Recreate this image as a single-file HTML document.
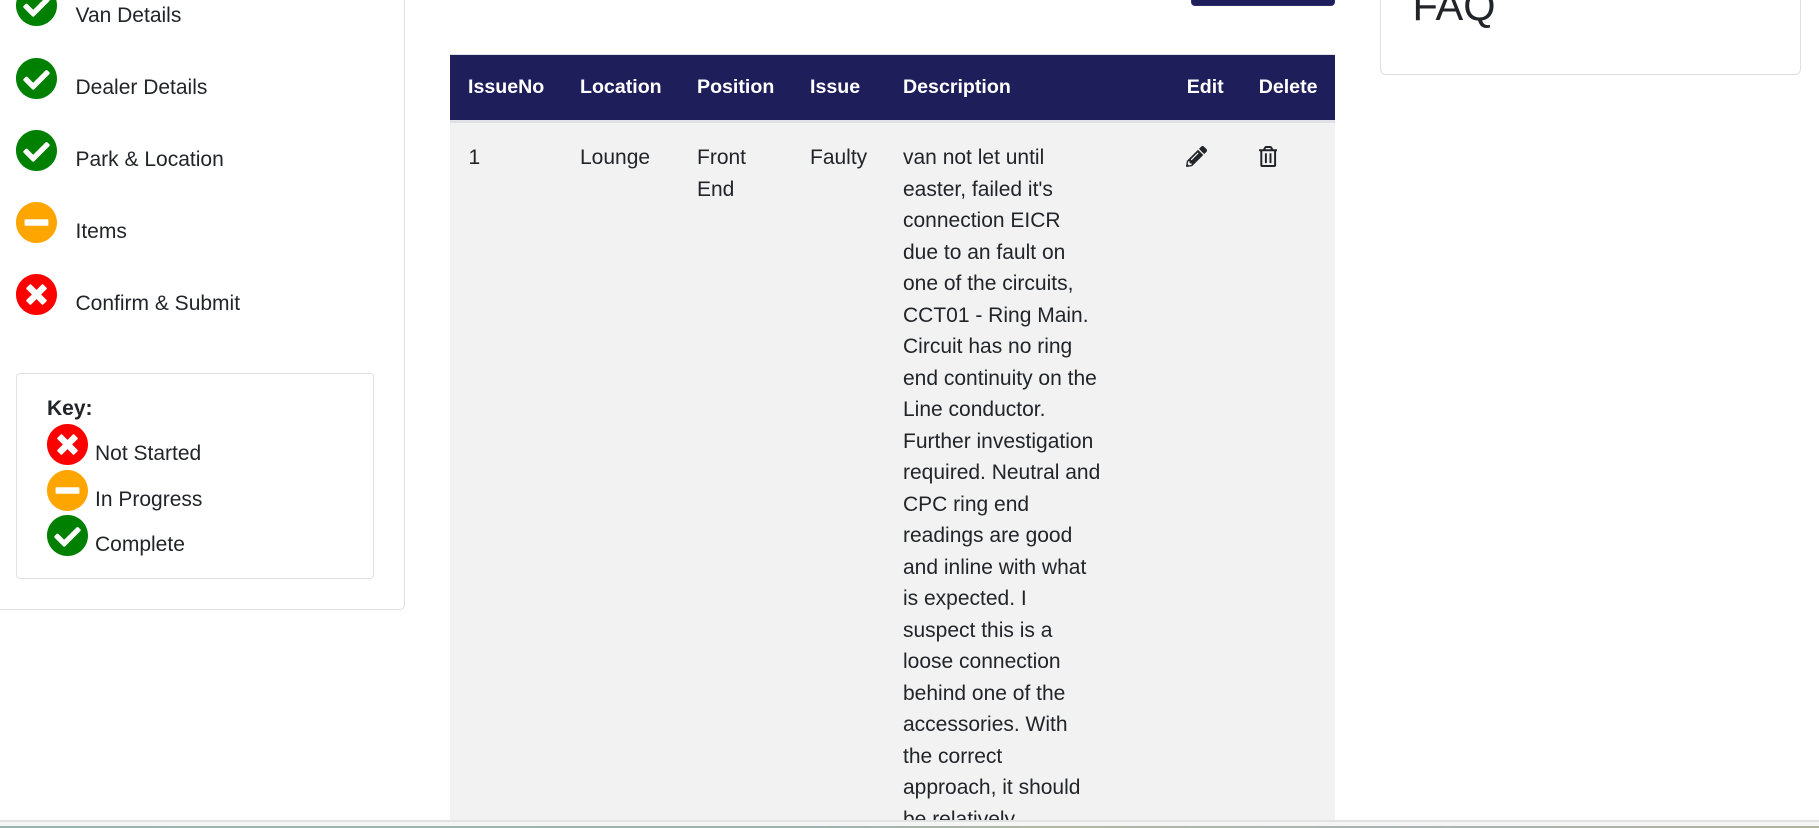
<!DOCTYPE html>
<html>
<head>
<meta charset="utf-8">
<style>
html,body{margin:0;padding:0;background:#fff}
#p{position:relative;width:1819px;height:828px;overflow:hidden;background:#fff;font-family:"Liberation Sans",Arial,sans-serif;font-size:21px;line-height:31.5px;color:#212529}
.a{position:absolute;white-space:nowrap}
.c{position:absolute;width:41px;height:41px;display:block}
.h{position:absolute;white-space:nowrap;top:72px;font-size:19.6px;font-weight:bold;color:#fff}
</style>
</head>
<body>
<div id="p">
  <svg width="0" height="0" style="position:absolute">
    <defs>
      <symbol id="ok" viewBox="8 8 496 496"><path fill="#008000" d="M504 256c0 136.967-111.033 248-248 248S8 392.967 8 256 119.033 8 256 8s248 111.033 248 248zM227.314 387.314l184-184c6.248-6.248 6.248-16.379 0-22.627l-22.627-22.627c-6.248-6.249-16.379-6.249-22.628 0L216 308.118l-70.059-70.059c-6.248-6.248-16.379-6.248-22.628 0l-22.627 22.627c-6.248 6.248-6.248 16.379 0 22.627l104 104c6.249 6.249 16.379 6.249 22.628 0z"/></symbol>
      <symbol id="no" viewBox="8 8 496 496"><path fill="#ff0000" d="M256 8C119 8 8 119 8 256s111 248 248 248 248-111 248-248S393 8 256 8zm121.6 313.1c4.7 4.7 4.7 12.3 0 17L338 377.6c-4.7 4.7-12.3 4.7-17 0L256 312l-65.1 65.6c-4.7 4.7-12.3 4.7-17 0L134.4 338c-4.7-4.7-4.7-12.3 0-17l65.6-65-65.6-65.1c-4.7-4.7-4.7-12.3 0-17l39.6-39.6c4.7-4.7 12.3-4.7 17 0l65 65.7 65.1-65.6c4.7-4.7 12.3-4.7 17 0l39.6 39.6c4.7 4.7 4.7 12.3 0 17L312 256l65.6 65.1z"/></symbol>
      <symbol id="mi" viewBox="8 8 496 496"><path fill="#ffa500" d="M256 8C119 8 8 119 8 256s111 248 248 248 248-111 248-248S393 8 256 8zM124 296c-6.600 0-12-5.400-12-12v-56c0-6.600 5.400-12 12-12h264c6.600 0 12 5.400 12 12v56c0 6.600-5.400 12-12 12H124z"/></symbol>
    </defs>
  </svg>

  <!-- Sidebar card -->
  <div style="position:absolute;left:-10px;top:-10px;width:413px;height:618px;border:1px solid #dfdfdf;border-radius:5px"></div>
  <svg class="c" style="left:16px;top:-15px"><use href="#ok"/></svg><div class="a" style="left:75.500px;top:0px">Van Details</div>
  <svg class="c" style="left:16px;top:58px"><use href="#ok"/></svg><div class="a" style="left:75.500px;top:72px">Dealer Details</div>
  <svg class="c" style="left:16px;top:130px"><use href="#ok"/></svg><div class="a" style="left:75.500px;top:144px">Park &amp; Location</div>
  <svg class="c" style="left:16px;top:202px"><use href="#mi"/></svg><div class="a" style="left:75.500px;top:216px">Items</div>
  <svg class="c" style="left:16px;top:274px"><use href="#no"/></svg><div class="a" style="left:75.500px;top:288px">Confirm &amp; Submit</div>

  <!-- Key -->
  <div style="position:absolute;left:16px;top:373px;width:356px;height:204px;border:1px solid #e2e2e2;border-radius:4px"></div>
  <div class="a" style="left:47px;top:393px;font-weight:bold">Key:</div>
  <svg class="c" style="left:47px;top:424px"><use href="#no"/></svg><div class="a" style="left:95px;top:438px">Not Started</div>
  <svg class="c" style="left:47px;top:470px"><use href="#mi"/></svg><div class="a" style="left:95px;top:484px">In Progress</div>
  <svg class="c" style="left:47px;top:515px"><use href="#ok"/></svg><div class="a" style="left:95px;top:529px">Complete</div>

  <!-- Button -->
  <div style="position:absolute;left:1191px;top:-10px;width:142px;height:14px;background:#1e1e5a;border:1px solid #2c2c70;border-radius:4px"></div>

  <!-- FAQ card -->
  <div style="position:absolute;left:1380px;top:-10px;width:419px;height:83px;border:1px solid #dfdfdf;border-radius:6px"></div>
  <div class="a" style="left:1412.500px;top:-18px;font-size:41.500px;line-height:48px">FAQ</div>

  <!-- Table -->
  <div style="position:absolute;left:450px;top:54px;width:885px;height:1px;background:#dee2e6"></div>
  <div style="position:absolute;left:450px;top:55px;width:885px;height:65px;background:#1e1e5a"></div>
  <div style="position:absolute;left:450px;top:120px;width:885px;height:3px;background:#dee2e6"></div>
  <div style="position:absolute;left:450px;top:123px;width:885px;height:697px;background:#f2f2f2"></div>
  <div class="h" style="left:468px">IssueNo</div>
  <div class="h" style="left:580px">Location</div>
  <div class="h" style="left:697px">Position</div>
  <div class="h" style="left:810px">Issue</div>
  <div class="h" style="left:903px">Description</div>
  <div class="h" style="left:1186.700px">Edit</div>
  <div class="h" style="left:1258.700px">Delete</div>

  <div class="a" style="left:468.500px;top:142px">1</div>
  <div class="a" style="left:580px;top:142px">Lounge</div>
  <div class="a" style="left:697px;top:142px">Front<br>End</div>
  <div class="a" style="left:810px;top:142px">Faulty</div>

  <div style="position:absolute;left:903px;top:123px;width:300px;height:697px;overflow:hidden">
    <div class="a" style="left:0;top:19px">van not let until<br>easter, failed it's<br>connection EICR<br>due to an fault on<br>one of the circuits,<br>CCT01 - Ring Main.<br>Circuit has no ring<br>end continuity on the<br>Line conductor.<br>Further investigation<br>required. Neutral and<br>CPC ring end<br>readings are good<br>and inline with what<br>is expected. I<br>suspect this is a<br>loose connection<br>behind one of the<br>accessories. With<br>the correct<br>approach, it should<br>be relatively</div>
  </div>

  <svg style="position:absolute;left:1186px;top:146px" width="21" height="21" viewBox="0 0 512 512"><path fill="#212529" d="M497.9 142.1l-46.100 46.100c-4.700 4.700-12.300 4.700-17 0l-111-111c-4.700-4.700-4.700-12.300 0-17l46.100-46.100c18.700-18.700 49.100-18.700 67.900 0l60.100 60.100c18.800 18.700 18.800 49.100 0 67.900zM284.200 99.800L21.600 362.400.4 483.900c-2.900 16.400 11.400 30.600 27.800 27.800l121.500-21.300 262.600-262.600c4.700-4.700 4.700-12.300 0-17l-111-111c-4.800-4.700-12.400-4.700-17.100 0zM124.100 339.900c-5.500-5.500-5.500-14.300 0-19.800l154-154c5.500-5.500 14.300-5.500 19.800 0s5.500 14.300 0 19.800l-154 154c-5.500 5.500-14.300 5.500-19.800 0zM88 424h48v36.300l-64.500 11.300-31.100-31.100L51.700 376H88v48z"/></svg>
  <svg style="position:absolute;left:1258.700px;top:146px" width="18.400" height="21" viewBox="0 0 448 512"><path fill="#212529" d="M268 416h24a12 12 0 0 0 12-12V188a12 12 0 0 0-12-12h-24a12 12 0 0 0-12 12v216a12 12 0 0 0 12 12zM432 80h-82.410l-34-56.700A48 48 0 0 0 274.410 0H173.590a48 48 0 0 0-41.160 23.300L98.410 80H16A16 16 0 0 0 0 96v16a16 16 0 0 0 16 16h16v336a48 48 0 0 0 48 48h288a48 48 0 0 0 48-48V128h16a16 16 0 0 0 16-16V96a16 16 0 0 0-16-16zM171.840 50.910A6 6 0 0 1 177 48h94a6 6 0 0 1 5.150 2.910L293.610 80H154.390zM368 464H80V128h288zm-212-48h24a12 12 0 0 0 12-12V188a12 12 0 0 0-12-12h-24a12 12 0 0 0-12 12v216a12 12 0 0 0 12 12z"/></svg>

  <!-- Bottom bar -->
  <div style="position:absolute;left:0;top:820px;width:1819px;height:2px;background:#e2e2e2"></div>
  <div style="position:absolute;left:0;top:822px;width:1819px;height:4px;background:#f5f5f5"></div>
  <div style="position:absolute;left:0;top:826px;width:1819px;height:2px;background:linear-gradient(90deg,#98b4b0 0%,#9fb4b0 45%,#b0b8a0 58%,#a8b4b4 75%,#b0b49c 100%)"></div>
</div>
</body>
</html>
